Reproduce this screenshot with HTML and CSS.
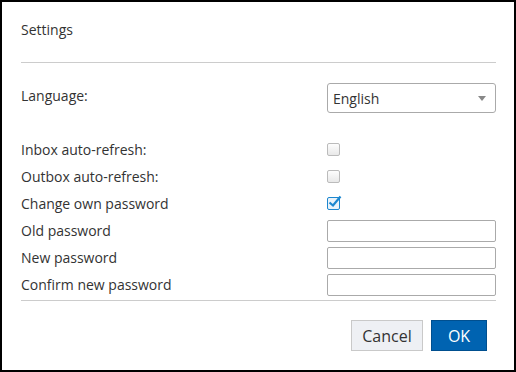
FILE: index.html
```html
<!DOCTYPE html>
<html lang="en">
<head>
  <meta charset="UTF-8">
  <title>Settings</title>
  <link rel="stylesheet" href="styles.css">
</head>
<body>
  <div class="dialog">
    <div class="dialog-title">Settings</div>

    <div class="section">
      <div class="lang-row">
        <label class="label lang-label">Language:</label>
        <div class="select">
          <span>English</span>
          <span class="arrow"></span>
        </div>
      </div>

      <div class="rows">
        <div class="row">
          <label class="label">Inbox auto-refresh:</label>
          <span class="check"></span>
        </div>
        <div class="row">
          <label class="label">Outbox auto-refresh:</label>
          <span class="check"></span>
        </div>
        <div class="row">
          <label class="label">Change own password</label>
          <span class="check checked">
            <svg width="16" height="16" viewBox="0 0 16 16"><path d="M2.5 8.5 L6 11.5 L13.5 2.5" fill="none" stroke="#1d87cf" stroke-width="2.2"/></svg>
          </span>
        </div>
        <div class="row">
          <label class="label">Old password</label>
          <input type="password" class="text-input">
        </div>
        <div class="row">
          <label class="label">New password</label>
          <input type="password" class="text-input">
        </div>
        <div class="row">
          <label class="label">Confirm new password</label>
          <input type="password" class="text-input">
        </div>
      </div>
    </div>

    <div class="buttons">
      <button class="btn btn-cancel">Cancel</button>
      <button class="btn btn-ok">OK</button>
    </div>
  </div>
</body>
</html>
```

FILE: styles.css
```css
body {
  margin: 0;
  font-family: "Open Sans", Arial, sans-serif;
  color: #333;
  background-color: #fff;
}

.dialog {
  width: 516px;
  height: 372px;
  box-sizing: border-box;
  border: 2px solid #000;
  padding: 0 18px 0 19px;
}

.dialog-title {
  font-size: 14px;
  line-height: 20px;
  padding: 18px 0 22px 0;
  border-bottom: 1px solid #ccc;
}

.label {
  font-size: 14px;
  line-height: 20px;
}

.lang-row {
  display: flex;
  justify-content: space-between;
  align-items: flex-start;
  padding-top: 20px;
  height: 53px;
  box-sizing: border-box;
}

.lang-label {
  padding-top: 3px;
}

.select {
  width: 169px;
  height: 30px;
  box-sizing: border-box;
  border: 1px solid #aaa;
  border-radius: 3px;
  display: flex;
  align-items: center;
  justify-content: space-between;
  padding: 0 9px 0 5px;
  font-size: 14px;
}

.arrow {
  width: 0;
  height: 0;
  border-left: 4px solid transparent;
  border-right: 4px solid transparent;
  border-top: 5px solid #888;
}

.rows {
  padding-top: 20px;
  border-bottom: 1px solid #ccc;
  padding-bottom: 2px;
}

.row {
  display: flex;
  align-items: center;
  justify-content: space-between;
  height: 27px;
}

.check {
  width: 13px;
  height: 13px;
  box-sizing: border-box;
  border: 1px solid #bbb;
  border-radius: 2px;
  background: linear-gradient(#fdfdfd, #e8e8e8);
  margin-right: 156px;
  position: relative;
}

.check.checked {
  border-color: #1d87cf;
  background: #eaf3fa;
}

.check svg {
  position: absolute;
  left: -1px;
  top: -4px;
}

.text-input {
  width: 169px;
  height: 22px;
  box-sizing: border-box;
  border: 1px solid #aaa;
  border-radius: 2px;
  margin: 0;
  padding: 0 4px;
}

.buttons {
  display: flex;
  justify-content: flex-end;
  gap: 8px;
  padding: 19px 9px 0 0;
}

.btn {
  font-family: "Open Sans", Arial, sans-serif;
  font-size: 16px;
  height: 31px;
  box-sizing: border-box;
  border-radius: 0;
  cursor: pointer;
}

.btn-cancel {
  width: 72px;
  background-color: #eef0f4;
  border: 1px solid #c9c9c9;
  color: #333;
}

.btn-ok {
  width: 56px;
  background-color: #0063b1;
  border: 1px solid #004f8f;
  color: #fff;
}
```
